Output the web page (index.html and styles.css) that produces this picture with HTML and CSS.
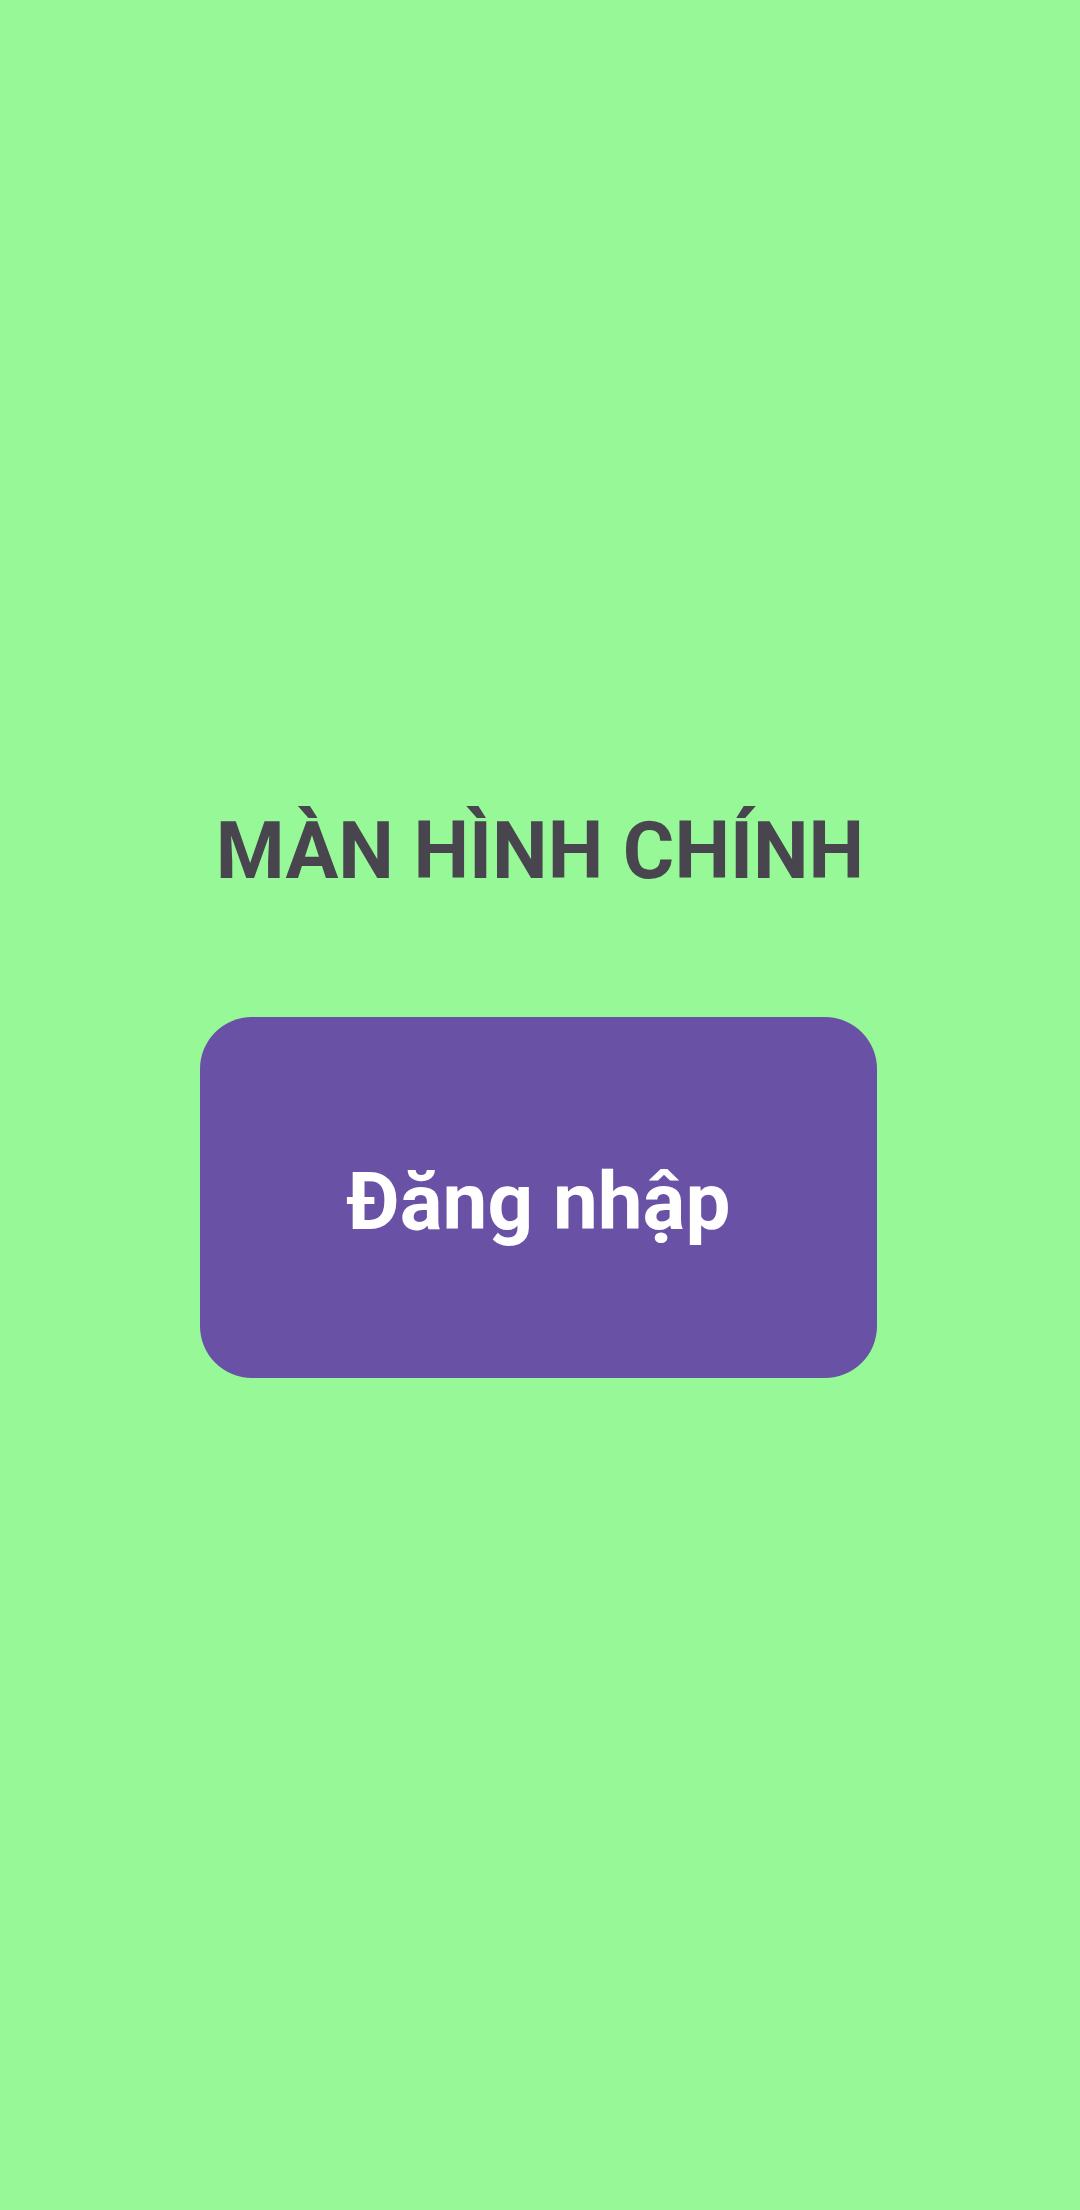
FILE: index.html
```html
<!DOCTYPE html>
<html lang="vi">
<head>
<meta charset="utf-8">
<title>Màn hình chính</title>
<link rel="stylesheet" href="styles.css">
</head>
<body>
<main class="screen">
  <h1 class="title">MÀN HÌNH CHÍNH</h1>
  <button class="login-btn" type="button">Đăng nhập</button>
</main>
</body>
</html>
```
FILE: styles.css
```css
html, body {
  margin: 0;
  padding: 0;
  background: #97f897;
}
.screen {
  width: 1080px;
  height: 2210px;
  display: flex;
  flex-direction: column;
  align-items: center;
  padding-top: 805px;
  box-sizing: border-box;
  font-family: Roboto, "Noto Sans", sans-serif;
}
.title {
  margin: 0;
  font-size: 78.75px;
  line-height: 92px;
  font-weight: 700;
  color: #49454f;
  text-align: center;
}
.login-btn {
  margin-top: 120px;
  width: 677px;
  height: 361px;
  margin-left: -3px;
  border: none;
  border-radius: 52px;
  background: #6951a5;
  color: #ffffff;
  font-family: Roboto, "Noto Sans", sans-serif;
  font-size: 80px;
  font-weight: 700;
  display: flex;
  align-items: center;
  justify-content: center;
  padding: 8px 0 0 0;
}
```
